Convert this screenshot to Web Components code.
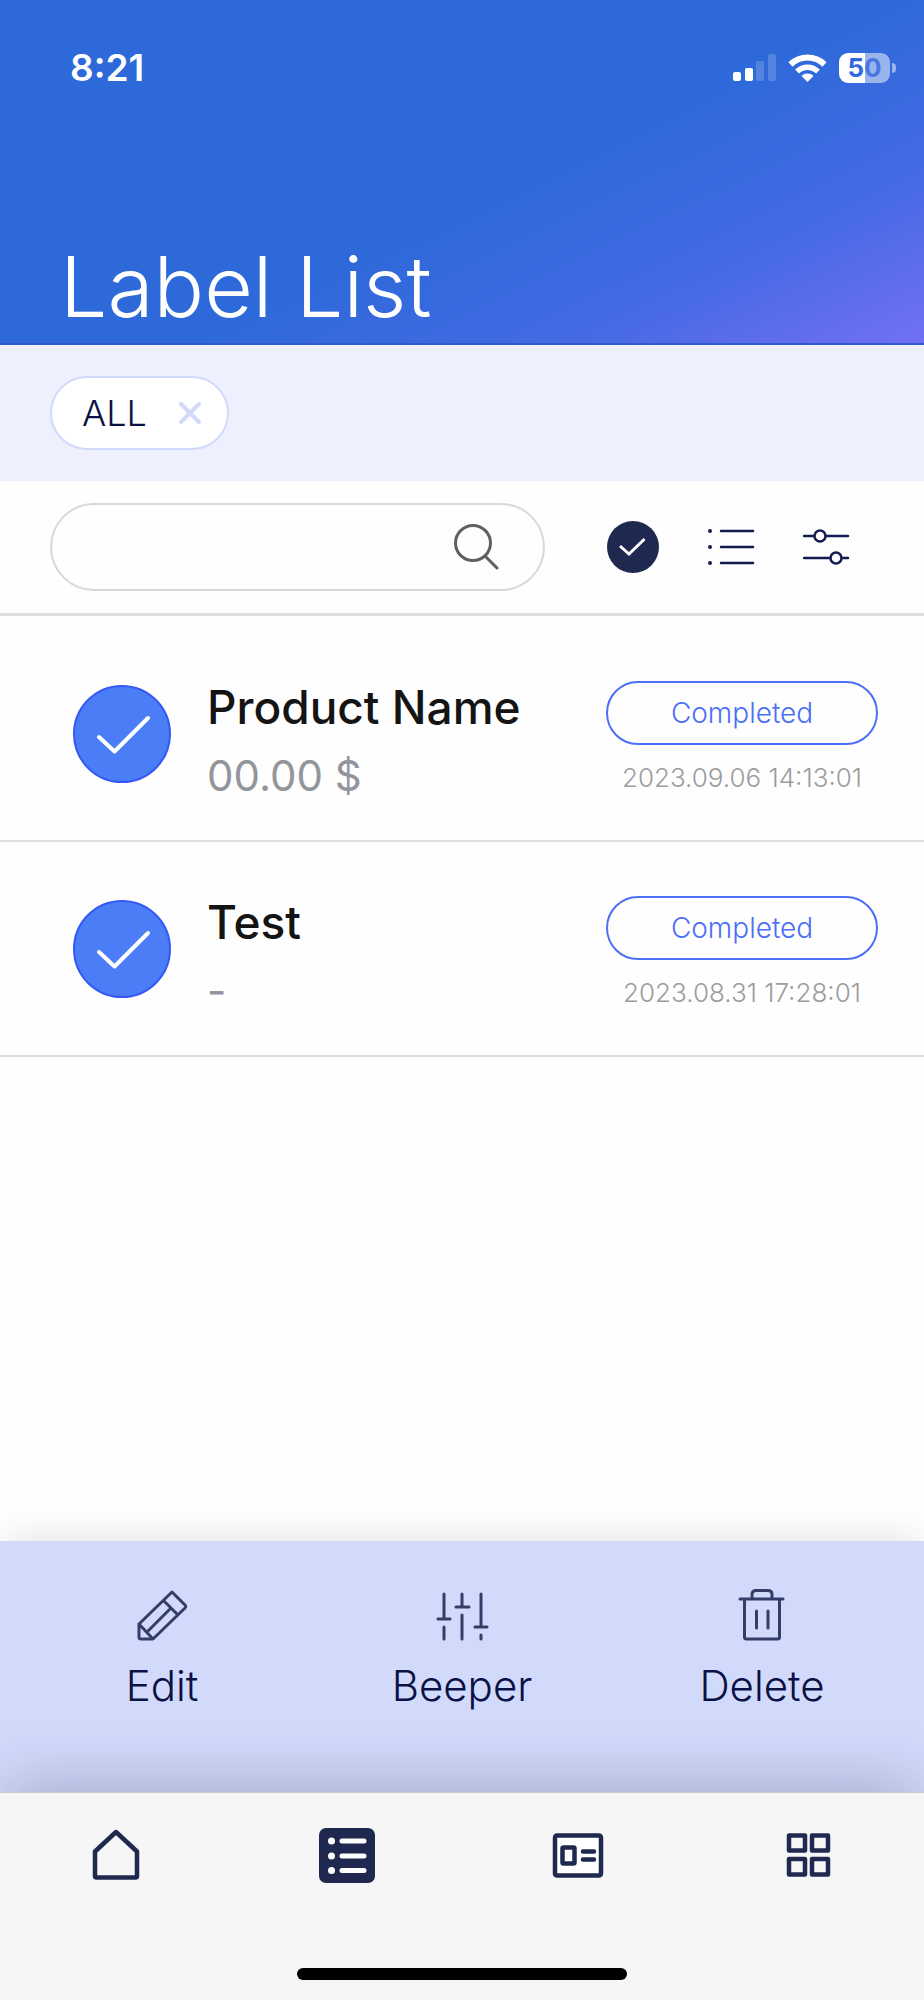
<!DOCTYPE html>
<html lang="en">
<head>
<meta charset="utf-8">
<meta name="viewport" content="width=device-width, initial-scale=1">
<title>Label List</title>
<style>
  body { margin: 0; background: #fefefe; font-family: Inter, "Noto Sans", sans-serif; font-weight: 300; color: #0b1144; }
</style>
</head>
<body>
<label-app></label-app>
<script>
const base = `<style>
  *, *::before { box-sizing: border-box; }
  :host([hidden]) { display: none; }
  svg { display: block; fill: none; stroke-linecap: round; stroke-linejoin: round; }
  button { display: block; margin: 0; padding: 0; border: 0; background: none; font: inherit; color: inherit; cursor: pointer; }
</style>`;

const define = (name, html, setup) => customElements.define(name, class extends HTMLElement {
  constructor() {
    super();
    const template = document.createElement('template');
    template.innerHTML = base + html;
    this.attachShadow({ mode: 'open' }).append(template.content.cloneNode(true));
  }
  connectedCallback() { if (setup) setup(this, this.shadowRoot); }
});

define('status-bar', `<style>
  :host { display: flex; align-items: center; justify-content: space-between; height: 40px; padding: 0 28px 0 70px; }
  time { font-size: 37px; line-height: 40px; font-weight: 600; }
  .icons { display: flex; align-items: center; gap: 12px; }
  .battery { display: flex; align-items: center; gap: 2px; }
  .level { width: 51px; height: 30px; border-radius: 9px; text-align: center; font-size: 26px; line-height: 30px; font-weight: 700; color: #3268db;
    background: linear-gradient(90deg, #fff 50%, #9ab4ee 50%); }
  .level span { color: #4a78e0; }
  .nub { width: 4px; height: 10px; border-radius: 0 5px 5px 0; background: #9ab4ee; }
</style>
<time>8:21</time>
<div class="icons">
  <svg width="43" height="28" viewBox="0 0 43 28" role="img" aria-label="Signal"><g fill="#fff"><rect y="18" width="8" height="9" rx="2"/><rect x="12" y="14" width="8" height="13" rx="2"/></g><g fill="#fff" opacity=".18"><rect x="23" y="7" width="8" height="20" rx="2"/><rect x="35" width="8" height="27" rx="2"/></g></svg>
  <svg width="39" height="30" viewBox="0 0 39 30" role="img" aria-label="Wi-Fi"><g stroke="#fff" stroke-width="6" stroke-linecap="butt"><path d="M2.5 11.500C12 2.300 27 2.300 36.500 11.500"/><path d="M9 18.500C15 12.700 24 12.700 30 18.500" stroke-width="5.500"/></g><path d="M13.500 23c3.500-3.200 8.500-3.200 12 0l-6 6z" fill="#fff"/></svg>
  <div class="battery"><div class="level">5<span>0</span></div><div class="nub"></div></div>
</div>`);

define('page-header', `<style>
  :host { display: flex; flex-direction: column; justify-content: space-between; min-height: 345px; padding: 48px 0 8px; color: #fff;
    border-bottom: 2px solid #3059cc; background: linear-gradient(154deg, #2d69d9 54%, #456ae4 78%, #7370f3 100%) border-box; }
  h1 { margin: 0; padding: 0 60px; font-size: 84px; line-height: 96px; font-weight: 300; }
</style>
<status-bar></status-bar>
<h1><slot></slot></h1>`);

define('filter-chip', `<style>
  :host { display: flex; align-items: center; gap: 32px; height: 74px; padding: 0 26px 0 30px; border: 2px solid #d1dafb; border-radius: 37px; background: #fff; font-size: 36px; line-height: 40px; }
</style>
<span><slot></slot></span>
<button aria-label="Remove filter"><svg width="22" height="22" viewBox="0 0 22 22" stroke="#d1dafb" stroke-width="4"><path d="M2 2l18 18M20 2L2 20"/></svg></button>`);

define('filter-bar', `<style>
  :host { display: flex; align-items: center; min-height: 136px; padding: 0 50px; background: #eef1fd; }
</style><slot></slot>`);

define('search-bar', `<style>
  :host { display: flex; align-items: center; gap: 48px; min-height: 135px; padding: 0 73px 0 50px; border-bottom: 3px solid #dcdcdc; }
  form { flex: 1; display: flex; align-items: center; min-width: 0; height: 88px; padding: 0 44px; margin-right: 14px; border: 2px solid #d8d8d8; border-radius: 44px; }
  input { flex: 1; min-width: 0; height: 60px; padding: 0; border: 0; outline: 0; background: none; font: inherit; font-size: 36px; color: inherit; }
</style>
<form role="search"><input type="text" aria-label="Search labels">
  <button type="button" aria-label="Search"><svg width="46" height="46" viewBox="0 0 46 46" stroke="#606060" stroke-width="3"><circle cx="20" cy="19" r="17.500"/><path d="M32 32l12 12"/></svg></button></form>
<button aria-label="Select all"><svg width="52" height="52" viewBox="0 0 52 52"><circle cx="26" cy="26" r="26" fill="#1f284e"/><path d="M13 25l9 8 15.500-15" stroke="#fff" stroke-width="3" stroke-linecap="butt" stroke-linejoin="miter"/></svg></button>
<button aria-label="List view"><svg width="48" height="38" viewBox="0 0 48 38" stroke="#131b50" stroke-width="2.500"><path d="M14 3h32M14 19h32M14 35h32"/><g fill="#131b50" stroke="none"><circle cx="3" cy="3" r="2"/><circle cx="3" cy="19" r="2"/><circle cx="3" cy="35" r="2"/></g></svg></button>
<button aria-label="Options"><svg width="48" height="38" viewBox="0 0 48 38" stroke="#131b50" stroke-width="2.500"><path d="M1 8h10M23 8h22M1 30h26M39 30h6"/><circle cx="17" cy="8" r="5.500"/><circle cx="33" cy="30" r="5.500"/></svg></button>`);

define('label-row', `<style>
  :host { display: flex; gap: 36px; min-height: 215px; padding: 54px 46px 0 73px; border-bottom: 2px solid #dfdfdf; }
  label { display: grid; flex: none; width: 98px; height: 98px; margin-top: 4px; cursor: pointer; }
  label > * { grid-area: 1 / 1; }
  input { appearance: none; margin: 0; border: 2px solid #3558f5; border-radius: 50%; }
  input:checked { background: #4a7df6; }
  svg { place-self: center; pointer-events: none; }
  .text { flex: 1; min-width: 0; }
  h2 { margin: 0; font-size: 46px; line-height: 52px; font-weight: 500; color: #141414; white-space: nowrap; }
  p { margin: 16px 0 0; font-size: 42px; line-height: 54px; font-weight: 400; color: #92959c; }
  .state { flex: none; display: flex; flex-direction: column; gap: 16px; width: 272px; text-align: center; }
  .badge { height: 64px; border: 2px solid #4b6ff5; border-radius: 32px; font-size: 28px; line-height: 60px; color: #4b6ff5; }
  .date { font-size: 26px; line-height: 34px; color: #9c9c9c; white-space: nowrap; }
</style>
<label><input type="checkbox" checked><svg width="56" height="44" viewBox="0 0 56 44" stroke="#fff" stroke-width="4" stroke-linecap="butt" stroke-linejoin="miter"><path d="M5 25l15.500 14.500L54 6"/></svg></label>
<div class="text"><h2><slot name="title"></slot></h2><p><slot name="price"></slot></p></div>
<div class="state"><span class="badge"><slot name="status"></slot></span><span class="date"><slot name="date"></slot></span></div>`,
(host, root) => root.querySelector('input').setAttribute('aria-label', 'Select ' + host.querySelector('[slot=title]').textContent));

const actions = {
  edit: '<path d="M4 35L37 3l13 13c1 1 1 2 0 3L18 50H6q-2 0-2-2zM4 35l14 15M13 42l23-23M28.500 11.500L43 26"/>',
  beeper: '<path d="M9 5v25M3 30h12M9 38v12M27 5v13M21 18h13M27 26v24M46 5v33M40 38h12M46 46v4"/>',
  trash: '<path d="M5 10h43M9.500 10v38q0 2 2 2h31q2 0 2-2V10M17 10V5.500q0-4 4-4h12q4 0 4 4V10M21.500 22v17M33 22v17"/>'
};
define('action-button', `<style>
  :host { flex: 1; display: flex; justify-content: center; }
  button { display: flex; flex-direction: column; align-items: center; gap: 18px; font-size: 42px; line-height: 50px; }
</style>
<button><svg width="54" height="54" viewBox="0 0 54 54" stroke="#343d68" stroke-width="3" aria-hidden="true"></svg><span><slot></slot></span></button>`,
(host, root) => { root.querySelector('svg').innerHTML = actions[host.getAttribute('icon')]; });

define('action-panel', `<style>
  :host { display: flex; align-items: flex-start; min-height: 251px; padding: 48px 12px 0; background: #d1dafb; box-shadow: 0 -10px 32px -6px rgba(0, 0, 0, .1); }
</style><slot></slot>`);

const tabs = {
  home: '<path d="M7 24.500L28 5l21 19.500v24.500q0 1.500-1.500 1.500h-39q-1.500 0-1.500-1.500z"/>',
  list: '<rect y="1" width="56" height="55" rx="7" fill="#1f284e" stroke="none"/><g stroke="#fff" stroke-width="5"><path d="M23 14h22M23 29h22M23 43.500h22"/></g><g fill="#fff" stroke="none"><circle cx="12.500" cy="14" r="3.500"/><circle cx="12.500" cy="29" r="3.500"/><circle cx="12.500" cy="43.500" r="3.500"/></g>',
  card: '<rect x="5" y="8.500" width="46" height="40" rx="2" fill="#fff"/><rect x="12.500" y="20.500" width="12" height="16" rx="1"/><path d="M33 24.500h11M33 32.500h11"/>',
  grid: '<path d="M8 8.500h16v15H8zM31 8.500h16v15H31zM8 32h16v15.500H8zM31 32h16v15.500H31z"/>'
};
define('tab-link', `<style>
  :host { flex: 1; display: flex; justify-content: center; }
  a { display: block; }
</style>
<a href="#"><svg width="56" height="56" viewBox="0 0 56 56" stroke="#1f284e" stroke-width="4.500" aria-hidden="true"></svg></a>`,
(host, root) => {
  const name = host.getAttribute('icon');
  root.querySelector('svg').innerHTML = tabs[name];
  root.querySelector('a').href = '#' + name;
  root.querySelector('a').setAttribute('aria-label', name);
});

define('tab-bar', `<style>
  :host { display: flex; flex-direction: column; justify-content: space-between; align-items: center; min-height: 208px; padding: 34px 0 20px; border-top: 1px solid #c9c9cf; background: #f6f6f6; box-shadow: 0 -12px 64px -8px rgba(40, 30, 70, .28); }
  nav { display: flex; align-self: stretch; }
  .indicator { width: 330px; height: 12px; border-radius: 6px; background: #000; }
</style>
<nav aria-label="Main"><slot></slot></nav><div class="indicator"></div>`);

define('label-app', `<style>
  :host { display: flex; flex-direction: column; min-height: 100vh; overflow: hidden; }
  main { flex: 1; padding-top: 11px; }
</style>
<page-header>Label List</page-header>
<filter-bar><filter-chip>ALL</filter-chip></filter-bar>
<search-bar></search-bar>
<main>
  <label-row><span slot="title">Product Name</span><span slot="price">00.00 $</span><span slot="status">Completed</span><time slot="date">2023.09.06 14:13:01</time></label-row>
  <label-row><span slot="title">Test</span><span slot="price">-</span><span slot="status">Completed</span><time slot="date">2023.08.31 17:28:01</time></label-row>
</main>
<action-panel>
  <action-button icon="edit">Edit</action-button>
  <action-button icon="beeper">Beeper</action-button>
  <action-button icon="trash">Delete</action-button>
</action-panel>
<tab-bar>
  <tab-link icon="home"></tab-link><tab-link icon="list"></tab-link><tab-link icon="card"></tab-link><tab-link icon="grid"></tab-link>
</tab-bar>`);
</script>
</body>
</html>
